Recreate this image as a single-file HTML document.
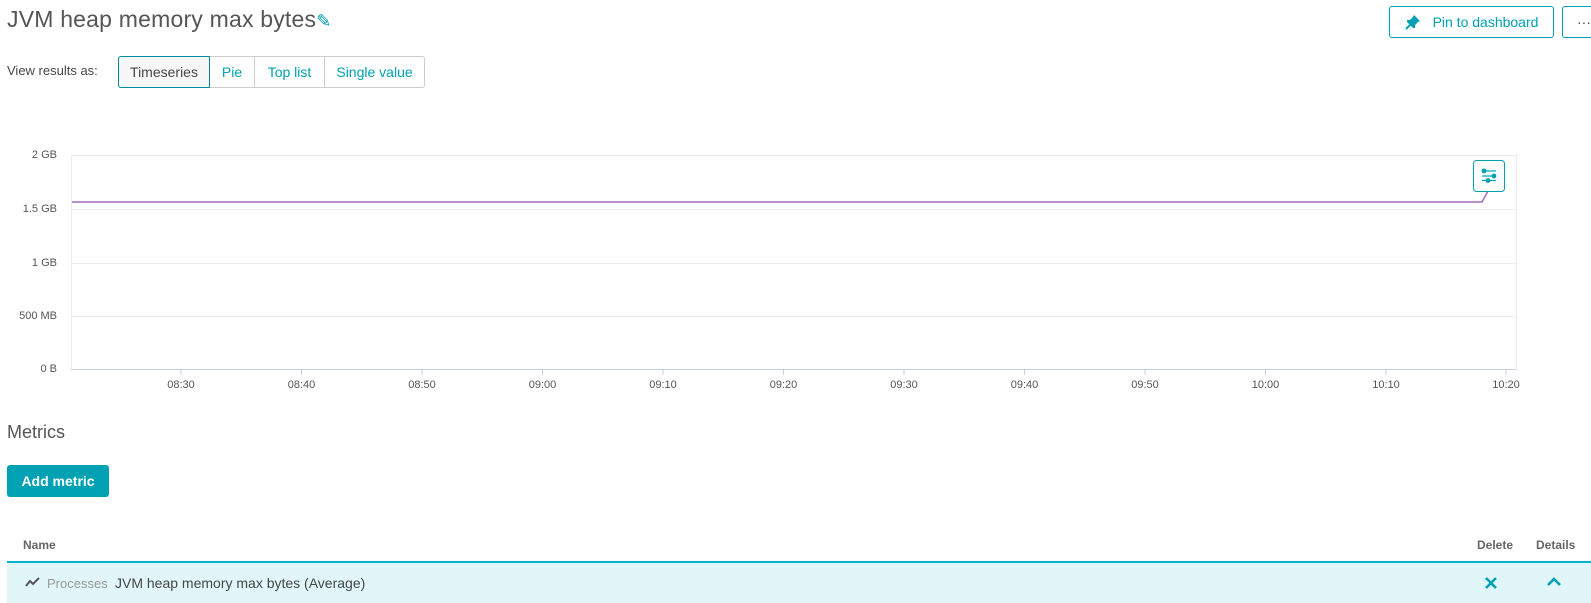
<!DOCTYPE html>
<html><head><style>
body{margin:0;width:1591px;height:603px;overflow:hidden;background:#fff;font-family:"Liberation Sans",sans-serif;color:#454646;position:relative}
.a{position:absolute}
.btn{position:absolute;border:1px solid #00a1b2;border-radius:3px;color:#00a1b2;font-size:14px;box-sizing:border-box;display:flex;align-items:center;justify-content:center}
.seg{position:absolute;top:56px;height:32px;box-sizing:border-box;border:1px solid #ccc;color:#00a1b2;font-size:14px;display:flex;align-items:center;justify-content:center}
.yl{position:absolute;right:1534px;font-size:11px;color:#555;text-align:right;white-space:nowrap}
.xl{position:absolute;top:379px;font-size:11px;color:#555;width:40px;margin-left:-20px;text-align:center}
</style></head><body>
<div class="a" style="left:7px;top:6px;font-size:23px;color:#555;letter-spacing:0.2px">JVM heap memory max bytes<span style="color:#00a1b2;font-size:18px">✎</span></div>
<div class="btn" style="left:1389px;top:6px;width:165px;height:32px"><svg width="16" height="16" style="margin-right:12px"><path d="M9 1L15 7L13 8L10 11L10 14L8 14L2 8L2 6L5 6L8 3Z" fill="#00a1b2"/><path d="M5 11L1 15" stroke="#00a1b2" stroke-width="2"/></svg>Pin to dashboard</div>
<div class="btn" style="left:1562px;top:6px;width:40px;height:32px;justify-content:flex-start;padding-left:14px;color:#454646">···</div>
<div class="a" style="left:7px;top:63px;font-size:13px">View results as:</div>
<div class="seg" style="left:118px;width:92px;border:1px solid #008c9c;border-radius:3px 0 0 3px;background:#f7f7f7;color:#454646;z-index:2">Timeseries</div>
<div class="seg" style="left:209px;width:46px">Pie</div>
<div class="seg" style="left:254px;width:71px">Top list</div>
<div class="seg" style="left:324px;width:101px;border-radius:0 3px 3px 0">Single value</div>

<svg class="a" style="left:0;top:0" width="1591" height="400">
<rect x="71.5" y="155.5" width="1445" height="214" fill="none" stroke="#ececec"/>
<g stroke="#ececec"><line x1="71" x2="1516" y1="209.5" y2="209.5"/><line x1="71" x2="1516" y1="263.5" y2="263.5"/><line x1="71" x2="1516" y1="316.5" y2="316.5"/></g>
<line x1="71" x2="1516" y1="369.5" y2="369.5" stroke="#c9cfe0"/>
<g stroke="#c9cfe0">
<line x1="181" x2="181" y1="369" y2="375"/><line x1="301.5" x2="301.5" y1="369" y2="375"/><line x1="422" x2="422" y1="369" y2="375"/><line x1="542.5" x2="542.5" y1="369" y2="375"/><line x1="663" x2="663" y1="369" y2="375"/><line x1="783.5" x2="783.5" y1="369" y2="375"/><line x1="904" x2="904" y1="369" y2="375"/><line x1="1024.5" x2="1024.5" y1="369" y2="375"/><line x1="1145" x2="1145" y1="369" y2="375"/><line x1="1265.5" x2="1265.5" y1="369" y2="375"/><line x1="1386" x2="1386" y1="369" y2="375"/><line x1="1506" x2="1506" y1="369" y2="375"/></g>
<polyline points="72,202 1482,202 1488,191" fill="none" stroke="#a26dc2" stroke-width="1.5"/>
<rect x="1473.5" y="160.5" width="31" height="31" rx="3" fill="#fff" stroke="#00a1b2"/>
<g stroke="#00a1b2" stroke-width="1.2" fill="#00a1b2"><line x1="1482" x2="1496" y1="171" y2="171"/><line x1="1482" x2="1496" y1="176" y2="176"/><line x1="1482" x2="1496" y1="180.5" y2="180.5"/><circle cx="1484" cy="171" r="1.8"/><circle cx="1494" cy="176" r="1.8"/><circle cx="1488" cy="180.5" r="1.8"/></g>
</svg>
<div class="yl" style="top:149px">2 GB</div>
<div class="yl" style="top:203px">1.5 GB</div>
<div class="yl" style="top:257px">1 GB</div>
<div class="yl" style="top:310px">500 MB</div>
<div class="yl" style="top:363px">0 B</div>
<div class="xl" style="left:181px">08:30</div><div class="xl" style="left:301.5px">08:40</div><div class="xl" style="left:422px">08:50</div><div class="xl" style="left:542.5px">09:00</div><div class="xl" style="left:663px">09:10</div><div class="xl" style="left:783.5px">09:20</div><div class="xl" style="left:904px">09:30</div><div class="xl" style="left:1024.5px">09:40</div><div class="xl" style="left:1145px">09:50</div><div class="xl" style="left:1265.5px">10:00</div><div class="xl" style="left:1386px">10:10</div><div class="xl" style="left:1506px">10:20</div>

<div class="a" style="left:7px;top:422px;font-size:18px;color:#555">Metrics</div>
<div class="a" style="left:7px;top:465px;width:102px;height:32px;background:#00a1b2;border-radius:3px;color:#fff;font-size:14px;font-weight:bold;display:flex;align-items:center;justify-content:center">Add metric</div>
<div class="a" style="left:23px;top:538px;font-size:12px;font-weight:bold;color:#666">Name</div>
<div class="a" style="left:1477px;top:538px;font-size:12px;font-weight:bold;color:#666">Delete</div>
<div class="a" style="left:1536px;top:538px;font-size:12px;font-weight:bold;color:#666">Details</div>
<div class="a" style="left:7px;top:561px;width:1584px;height:42px;background:#e1f6f9;border-top:2px solid #00b4c8;box-sizing:border-box"></div>
<svg class="a" style="left:25px;top:576px" width="16" height="12"><polyline points="1,10 5,5 8,8 14,2" fill="none" stroke="#555" stroke-width="2"/></svg>
<div class="a" style="left:47px;top:576px;font-size:13px;color:#999">Processes</div>
<div class="a" style="left:115px;top:575px;font-size:14px;color:#454646">JVM heap memory max bytes (Average)</div>
<svg class="a" style="left:1484px;top:576px" width="14" height="14"><path d="M2 2L12 12M12 2L2 12" stroke="#00a1b2" stroke-width="2.6"/></svg>
<svg class="a" style="left:1546px;top:577px" width="16" height="10"><path d="M2 8L8 2L14 8" fill="none" stroke="#00a1b2" stroke-width="2.6"/></svg>
</body></html>
